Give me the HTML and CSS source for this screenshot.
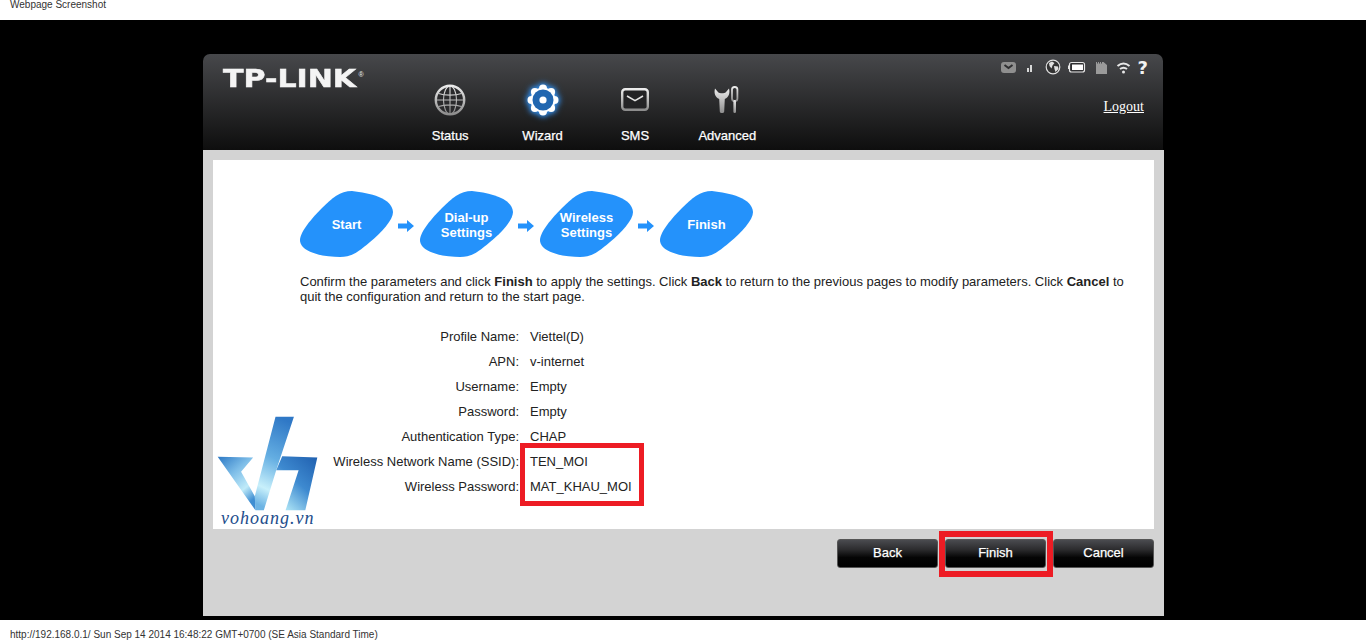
FILE: index.html
```html
<!DOCTYPE html>
<html lang="en">
  <head>
    <meta charset="UTF-8" />
    <title>Webpage Screenshot</title>
    <link rel="stylesheet" href="styles.css">
  </head>
  <body>
    <div class="page-caption">Webpage Screenshot</div>

    <div class="stage">
      <div class="frame">
        <header class="top-bar">
          <div class="logo"><span class="logo-text">TP-LINK</span><span class="logo-reg">®</span></div>

          <nav class="nav">
            <a class="nav-item">
              <svg class="nav-icon" width="32" height="32" viewBox="0 0 32 32">
                <defs>
                  <linearGradient id="grey" x1="0" y1="0" x2="0" y2="1">
                    <stop offset="0" stop-color="#ececec" />
                    <stop offset="1" stop-color="#8d8d8d" />
                  </linearGradient>
                </defs>
                <circle cx="16" cy="16" r="14.2" fill="#2a2a2c" stroke="url(#grey)" stroke-width="2.4" />
                <g fill="none" stroke="url(#grey)" stroke-width="1.1">
                  <ellipse cx="16" cy="16" rx="6.5" ry="14" />
                  <path d="M16 2v28M2 16h28M4.5 9.5c6 2.2 17 2.2 23 0M4.5 22.5c6-2.2 17-2.2 23 0" />
                </g>
              </svg>
              <span>Status</span>
            </a>
            <a class="nav-item">
              <svg class="nav-icon nav-icon-active" width="32" height="32" viewBox="0 0 32 32">
                <g fill="#fff">
                  <circle cx="16" cy="16" r="12.5" />
                  <circle cx="16" cy="4.500" r="4" />
                  <circle cx="16" cy="27.500" r="4" />
                  <circle cx="4.500" cy="16" r="4" />
                  <circle cx="27.500" cy="16" r="4" />
                  <circle cx="7.900" cy="7.900" r="4" />
                  <circle cx="24.100" cy="7.900" r="4" />
                  <circle cx="7.900" cy="24.100" r="4" />
                  <circle cx="24.100" cy="24.100" r="4" />
                </g>
                <circle cx="16" cy="16" r="10.500" fill="#2066b0" />
                <circle cx="16" cy="16" r="3.600" fill="#fff" />
              </svg>
              <span>Wizard</span>
            </a>
            <a class="nav-item">
              <svg class="nav-icon" width="32" height="32" viewBox="0 0 32 32">
                <rect x="3.2" y="5.2" width="25.6" height="20.6" rx="3" fill="#232325" stroke="url(#grey)" stroke-width="2.4" />
                <path d="M8 12l8 4.6 8-4.6" fill="none" stroke="#e4e4e4" stroke-width="1.6" />
              </svg>
              <span>SMS</span>
            </a>
            <a class="nav-item">
              <svg class="nav-icon" width="32" height="32" viewBox="0 0 32 32">
                <path d="M4 4.500C2.800 9 4 13 8.200 15L8.800 27.500C8.900 29.500 13.100 29.500 13.200 27.500L13.800 15C18 13 19.200 9 18 4.500L14.800 8.200C13.500 9.500 8.500 9.500 7.200 8.200Z" fill="url(#grey)" />
                <rect x="21" y="3" width="5.400" height="14" rx="2.600" fill="none" stroke="url(#grey)" stroke-width="1.800" />
                <rect x="22.400" y="16" width="2.600" height="13" rx="1.200" fill="url(#grey)" />
              </svg>
              <span>Advanced</span>
            </a>
          </nav>

          <div class="top-right">
            <svg class="status-icons" width="148" height="24" viewBox="0 0 148 24">
              <rect x="0" y="3" width="15" height="11" rx="3" fill="#8f8f8f" />
              <path d="M3.500 6l4 3 4-3" fill="none" stroke="#2e2e30" stroke-width="2" />
              <rect x="26" y="9" width="2" height="4" fill="#d8d8d8" />
              <rect x="29" y="6" width="2" height="7" fill="#d8d8d8" />
              <circle cx="52" cy="8" r="6.800" fill="#333" stroke="#e0e0e0" stroke-width="1.200" />
              <path d="M48 4l3-1.500 2.500 1.500-2 2.500-1 3-2-2.500zM53 7l4 0.500 0.500 2.500-3 3-1-3z" fill="#e0e0e0" />
              <rect x="68.500" y="3.500" width="15" height="9.500" rx="2" fill="#2e2e30" stroke="#e6e6e6" stroke-width="1.200" />
              <rect x="71" y="5.500" width="11" height="5.500" fill="#fff" />
              <rect x="67" y="6.500" width="1.500" height="3.500" fill="#e6e6e6" />
              <path d="M95 3h1v1.500h1V3h1v1.500h1V3h1v1.500h1V3h1.500l3.500 3v9h-11z" fill="#9a9a9a" />
              <path d="M116.500 7c3.800-3.200 8.200-3.200 12 0M119 10c2.400-1.800 4.600-1.800 7 0" fill="none" stroke="#e8e8e8" stroke-width="2" />
              <circle cx="122.500" cy="13" r="1.500" fill="#e8e8e8" />
              <text class="status-help" x="136.500" y="14.500">?</text>
            </svg>
            <a class="logout">Logout</a>
          </div>
        </header>

        <main class="content">
          <section class="panel">
            <div class="steps">
              <div class="step">
                <svg class="blob" width="94" height="68" viewBox="0 0 94 68"><path d="M52 1C70 3 92 8 93 22C93 30 82 42 70 52C58 62 52 67 40 67C25 67 0 63 0 50C0 42 12 28 22 18C32 8 40 1 52 1Z" /></svg>
                <span class="step-label">Start</span>
              </div>
              <svg class="step-arrow" width="16" height="12" viewBox="0 0 16 12"><path d="M0 3.500h9V0l7 6-7 6V8.500H0z" /></svg>
              <div class="step">
                <svg class="blob" width="94" height="68" viewBox="0 0 94 68"><path d="M52 1C70 3 92 8 93 22C93 30 82 42 70 52C58 62 52 67 40 67C25 67 0 63 0 50C0 42 12 28 22 18C32 8 40 1 52 1Z" /></svg>
                <span class="step-label step-label-two">Dial-up<br>Settings</span>
              </div>
              <svg class="step-arrow" width="16" height="12" viewBox="0 0 16 12"><path d="M0 3.500h9V0l7 6-7 6V8.500H0z" /></svg>
              <div class="step">
                <svg class="blob" width="94" height="68" viewBox="0 0 94 68"><path d="M52 1C70 3 92 8 93 22C93 30 82 42 70 52C58 62 52 67 40 67C25 67 0 63 0 50C0 42 12 28 22 18C32 8 40 1 52 1Z" /></svg>
                <span class="step-label step-label-two">Wireless<br>Settings</span>
              </div>
              <svg class="step-arrow" width="16" height="12" viewBox="0 0 16 12"><path d="M0 3.500h9V0l7 6-7 6V8.500H0z" /></svg>
              <div class="step">
                <svg class="blob" width="94" height="68" viewBox="0 0 94 68"><path d="M52 1C70 3 92 8 93 22C93 30 82 42 70 52C58 62 52 67 40 67C25 67 0 63 0 50C0 42 12 28 22 18C32 8 40 1 52 1Z" /></svg>
                <span class="step-label">Finish</span>
              </div>
            </div>

            <p class="intro">Confirm the parameters and click <b>Finish</b> to apply the settings. Click <b>Back</b> to return to the previous pages to modify parameters. Click <b>Cancel</b> to quit the configuration and return to the start page.</p>

            <dl class="params">
              <dt>Profile Name:</dt><dd>Viettel(D)</dd>
              <dt>APN:</dt><dd>v-internet</dd>
              <dt>Username:</dt><dd>Empty</dd>
              <dt>Password:</dt><dd>Empty</dd>
              <dt>Authentication Type:</dt><dd>CHAP</dd>
              <dt>Wireless Network Name (SSID):</dt><dd>TEN_MOI</dd>
              <dt>Wireless Password:</dt><dd>MAT_KHAU_MOI</dd>
            </dl>

            <!-- highlight over the SSID and password rows -->
            <div class="mark mark-params"></div>

            <!-- watermark -->
            <div class="watermark">
              <svg width="102" height="97" viewBox="20 15 305 290">
                <defs>
                  <linearGradient id="vh-stem" x1="0.6" y1="0" x2="0.4" y2="1">
                    <stop offset="0" stop-color="#2f78c6" />
                    <stop offset="0.45" stop-color="#64aee2" />
                    <stop offset="0.8" stop-color="#c8f0fb" />
                    <stop offset="1" stop-color="#6db4e4" />
                  </linearGradient>
                  <linearGradient id="vh-wing" x1="0" y1="0" x2="0.6" y2="1">
                    <stop offset="0" stop-color="#2c78c4" />
                    <stop offset="0.4" stop-color="#7dbde8" />
                    <stop offset="0.75" stop-color="#c0ebf9" />
                    <stop offset="1" stop-color="#3f8ed2" />
                  </linearGradient>
                  <linearGradient id="vh-arm" x1="1" y1="0" x2="0.3" y2="1">
                    <stop offset="0" stop-color="#1f5faf" />
                    <stop offset="0.55" stop-color="#3e8ad0" />
                    <stop offset="1" stop-color="#a8e0f4" />
                  </linearGradient>
                </defs>
                <path d="M133 258L195 20L250 20L197 180L160 300L135 300Z" fill="url(#vh-stem)" />
                <path d="M22 140L128 142L92 185L133 258L135 300Z" fill="url(#vh-wing)" />
                <path d="M215 138L320 142L284 300L225 300L264 180L197 180Z" fill="url(#vh-arm)" />
              </svg>
              <span class="watermark-text">vohoang.vn</span>
            </div>
          </section>

          <div class="actions">
            <button class="btn">Back</button>
            <button class="btn btn-marked">Finish</button>
            <button class="btn">Cancel</button>
          </div>
        </main>
      </div>
    </div>

    <div class="page-footer">http://192.168.0.1/ Sun Sep 14 2014 16:48:22 GMT+0700 (SE Asia Standard Time)</div>
  </body>
</html>
```

FILE: styles.css
```css
* {
  margin: 0;
  padding: 0;
  box-sizing: border-box;
}

body {
  width: 1366px;
  height: 640px;
  overflow: hidden;
  background-color: #fff;
  font-family: "Liberation Sans", Arial, sans-serif;
  font-size: 13px;
  color: #222;
}

.page-caption {
  height: 20px;
  padding-left: 10px;
  font-size: 10px;
  line-height: 9px;
  color: #333;
}

.page-footer {
  height: 20px;
  padding: 9px 0 0 10px;
  font-size: 10px;
  line-height: 11px;
  color: #333;
}

.stage {
  height: 600px;
  padding: 34px 202px 4px 203px;
  background-color: #000;
}

.frame {
  height: 562px;
  display: flex;
  flex-direction: column;
}

/* header */
.top-bar {
  height: 96px;
  margin-right: 1px;
  display: flex;
  background: linear-gradient(#47484b, #0e0e0e);
  border-radius: 7px 7px 0 0;
}

.logo {
  width: 201px;
  height: 40px;
  padding: 13px 0 0 20px;
  color: #f4f4f4;
  white-space: nowrap;
}

.logo-text {
  display: inline-block;
  font-family: "DejaVu Sans", sans-serif;
  font-weight: bold;
  font-size: 24px;
  line-height: 24px;
  -webkit-text-stroke: 0.5px #f4f4f4;
  transform: scaleX(1.25);
  transform-origin: left center;
}

.logo-reg {
  position: relative;
  left: 29px;
  top: -10px;
  font-size: 7px;
}

.nav {
  display: flex;
  padding-top: 30px;
}

.nav-item {
  width: 92.4px;
  display: flex;
  flex-direction: column;
  align-items: center;
  color: #fff;
  -webkit-text-stroke: 0.25px #fff;
  line-height: 14px;
}

.nav-icon {
  margin-bottom: 13px;
}

.nav-icon-active {
  filter: drop-shadow(0 0 3px #2f86de) drop-shadow(0 0 2px #2f86de);
}

.top-right {
  margin-left: auto;
  padding: 5px 0 0;
  display: flex;
  flex-direction: column;
  align-items: flex-end;
}

.status-icons {
  margin-right: 14px;
}

.status-help {
  font-family: "DejaVu Sans", sans-serif;
  font-weight: bold;
  font-size: 18px;
  fill: #f2f2f2;
}

.logout {
  margin: 15px 19px 0 0;
  font-family: "Liberation Serif", "Times New Roman", serif;
  font-size: 14px;
  line-height: 18px;
  color: #fff;
  text-decoration: underline;
}

/* body of the page */
.content {
  flex: 1;
  padding: 10px 10px 0;
  background-color: #d3d3d3;
}

.panel {
  position: relative;
  height: 369px;
  padding: 30px 30px 0 87px;
  background-color: #fff;
}

.steps {
  display: flex;
  align-items: center;
}

.step {
  position: relative;
  width: 94px;
  height: 68px;
  padding-right: 1px;
  display: flex;
  justify-content: center;
  align-items: center;
}

.blob {
  position: absolute;
  top: 0;
  left: 0;
  fill: #2492fb;
}

.step-label {
  position: relative;
  color: #fff;
  font-weight: bold;
  line-height: 15px;
  text-align: center;
}

.step-label-two {
  padding-top: 2px;
}

.step-arrow {
  margin: 3px 6px 0 4px;
  fill: #2492fb;
}

.intro {
  margin-top: 16px;
  line-height: 15px;
}

.params {
  margin-top: 20px;
  display: grid;
  grid-template-columns: 219px 1fr;
  grid-auto-rows: 25px;
  line-height: 25px;
}

.params dt {
  text-align: right;
}

.params dd {
  padding-left: 11px;
}

.mark {
  position: absolute;
  border: 5px solid #ed1c24;
}

.mark-params {
  left: 307px;
  top: 283px;
  width: 124px;
  height: 63px;
}

.watermark {
  position: absolute;
  left: 4px;
  top: 255px;
  width: 102px;
}

.watermark svg {
  display: block;
}

.watermark-text {
  display: block;
  margin: -4px 0 0 4px;
  font-family: "Liberation Serif", serif;
  font-style: italic;
  font-size: 18px;
  line-height: 20px;
  letter-spacing: 1px;
  color: #1d4d8c;
  white-space: nowrap;
}

/* buttons */
.actions {
  margin-top: 10px;
  display: flex;
  justify-content: flex-end;
  gap: 7px;
}

.btn {
  position: relative;
  width: 101px;
  height: 29px;
  padding-bottom: 2px;
  border: 1px solid #555;
  border-radius: 3px;
  background: linear-gradient(#4a4b4f 0, #2c2c2e 35%, #050505 65%, #000 100%);
  color: #fff;
  -webkit-text-stroke: 0.25px #fff;
  font-family: inherit;
  font-size: 13px;
}

.btn-marked::after {
  content: "";
  position: absolute;
  box-sizing: border-box;
  left: -7px;
  top: -9px;
  width: 114px;
  height: 46px;
  border: 6px solid #ed1c24;
}
```
